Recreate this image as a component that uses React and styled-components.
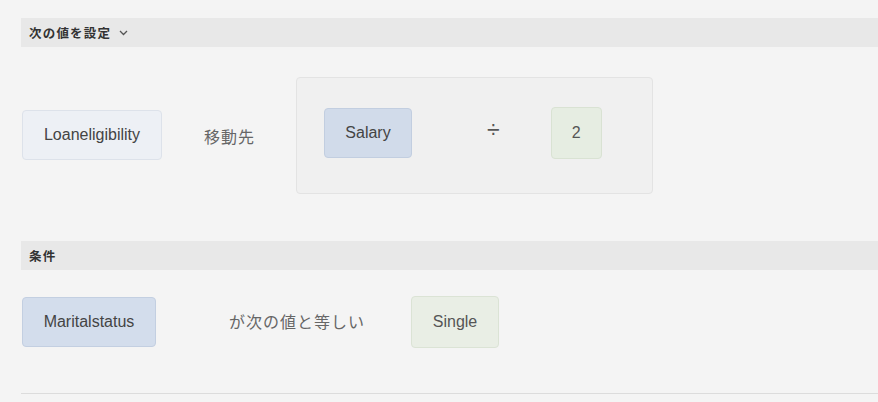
import React from 'react';
import styled, { createGlobalStyle } from 'styled-components';

const GlobalStyle = createGlobalStyle`
    body {
        margin: 0;
        background: #f4f4f4;
        font-family: "Liberation Sans", "Noto Sans CJK JP", sans-serif;
    }
`

const Page = styled.div`
    padding: 18px 0 0 21px;
    width: 857px;
`

const SectionHeader = styled.div`
    display: flex;
    align-items: center;
    height: 29px;
    padding-left: 8px;
    background: #e8e8e8;
    font-family: "Noto Sans CJK JP", sans-serif;
    font-weight: 700;
    font-size: 12.5px;
    letter-spacing: 1.2px;
    color: #333;
`

const Chevron = styled.svg`
    margin-left: 8px;
    margin-top: 1px;
`

const Row = styled.div`
    display: flex;
    align-items: center;
    padding: ${props => props.pad};
`

const Chip = styled.div`
    display: flex;
    align-items: center;
    justify-content: center;
    box-sizing: border-box;
    height: ${props => props.h || 50}px;
    padding: 0 ${props => props.px || 18}px;
    min-width: ${props => props.w || 0}px;
    border-radius: 4px;
    font-size: 16px;
    color: ${props => props.color || '#444'};
    background: ${props => props.bg};
    border: 1px solid ${props => props.border};
    margin: 0 0 ${props => props.mb || 0}px ${props => props.ml || 0}px;
`

const Label = styled.span`
    font-family: "Noto Sans CJK JP", sans-serif;
    font-size: 16px;
    letter-spacing: 1px;
    color: #666;
    margin: 0 ${props => props.mr}px 0 ${props => props.ml}px;
    padding-bottom: ${props => props.pb || 0}px;
`

const Formula = styled.div`
    display: flex;
    align-items: center;
    box-sizing: border-box;
    width: 357px;
    height: 117px;
    padding: 0 0 6px 26px;
    background: #f0f0f0;
    border: 1px solid #e3e3e3;
    border-radius: 4px;
`

const Operator = styled.span`
    font-size: 23px;
    color: #555;
    margin: 0 51px 0 75px;
    padding-bottom: 4px;
`

const Divider = styled.div`
    margin-top: 45px;
    border-top: 1px solid #dcdcdc;
`

const App = () => {
    return (<>
        <GlobalStyle />
        <Page>
            <SectionHeader>
                次の値を設定
                <Chevron width="9" height="6" viewBox="0 0 9 6">
                    <polyline points="1,1 4.5,4.5 8,1" fill="none" stroke="#555" strokeWidth="1.3" />
                </Chevron>
            </SectionHeader>
            <Row pad="30px 0 47px 0">
                <Chip ml={1} mb={2} w={140} bg="#edf0f5" border="#dde2ea">Loaneligibility</Chip>
                <Label ml={42} mr={41}>移動先</Label>
                <Formula>
                    <Chip ml={1} w={88} bg="#d1dbea" border="#c2cee0">Salary</Chip>
                    <Operator>÷</Operator>
                    <Chip w={51} h={52} px={10} color="#555" bg="#e6ede2" border="#d9e2d3">2</Chip>
                </Formula>
            </Row>
            <SectionHeader>条件</SectionHeader>
            <Row pad="26px 0 0 0">
                <Chip ml={1} w={134} bg="#d3ddec" border="#c3cfe1">Maritalstatus</Chip>
                <Label ml={73} mr={46} pb={2}>が次の値と等しい</Label>
                <Chip w={88} h={52} color="#555" bg="#e9eee5" border="#dbe3d5">Single</Chip>
            </Row>
            <Divider />
        </Page>
    </>);
}

export default App;
